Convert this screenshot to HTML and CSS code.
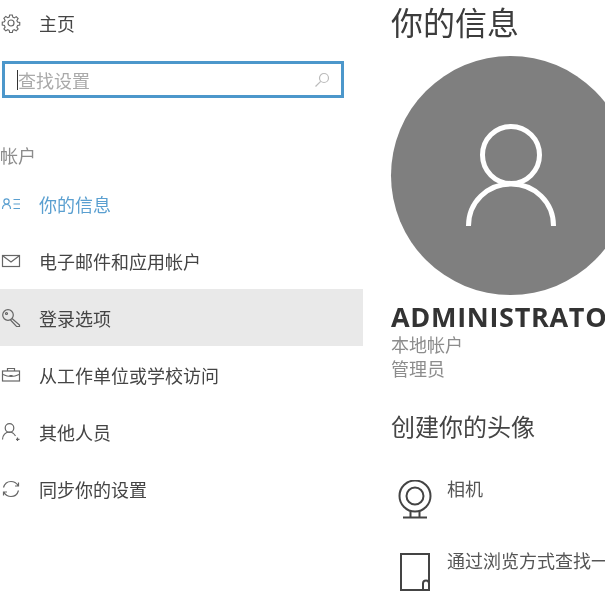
FILE: index.html
```html
<!DOCTYPE html>
<html lang="zh-CN">
<head>
<meta charset="utf-8">
<title>你的信息</title>
<link rel="stylesheet" href="styles.css">
</head>
<body>
<div class="page">
  <aside class="sidebar">
    <div class="home">
      <svg class="icon" viewBox="0 0 20 20"><circle cx="10" cy="10" r="3" /><path d="M8.600 1.600h2.800l.5 2.300 1.600.7 2-1.300 2 2-1.300 2 .7 1.600 2.300.5v2.800l-2.300.5-.7 1.600 1.300 2-2 2-2-1.300-1.600.7-.5 2.300H8.600l-.5-2.300-1.600-.7-2 1.300-2-2 1.300-2-.7-1.600-2.300-.5V9.200l2.300-.5.7-1.600-1.300-2 2-2 2 1.300 1.600-.7z" transform="translate(.5 .5) scale(.95)"/></svg>
      <span>主页</span>
    </div>
    <div class="search">
      <span class="caret"></span>
      <span class="placeholder">查找设置</span>
      <svg class="search-icon" viewBox="0 0 16 16"><circle cx="10" cy="6" r="4.500"/><path d="M6.700 9.300 1.500 14.500"/></svg>
    </div>
    <div class="section">帐户</div>
    <nav class="nav">
      <div class="row active">
        <svg class="icon" viewBox="0 0 20 20"><circle cx="5.500" cy="7.500" r="2.600"/><path d="M1.500 15c0-2.500 1.500-4.500 4-4.500s4 2 4 4.500M12.500 5.500h6.500M12.500 10h6.500M12.500 14.500h6.500"/></svg>
        <span>你的信息</span>
      </div>
      <div class="row">
        <svg class="icon" viewBox="0 0 20 20"><rect x="1.500" y="4.500" width="17" height="11"/><path d="M2 5l8 6 8-6"/></svg>
        <span>电子邮件和应用帐户</span>
      </div>
      <div class="row hover">
        <svg class="icon" viewBox="0 0 20 20"><circle cx="7" cy="7" r="5.300"/><circle cx="5.500" cy="5.500" r="1"/><path d="M11 10.500l7.500 6.500v1.500h-3L9.500 12"/></svg>
        <span>登录选项</span>
      </div>
      <div class="row">
        <svg class="icon" viewBox="0 0 20 20"><rect x="1.500" y="6" width="17" height="10"/><path d="M6.500 6V3.500h7V6M2 9.500c5 2.500 11 2.500 16 0M8.500 10.500h3"/></svg>
        <span>从工作单位或学校访问</span>
      </div>
      <div class="row">
        <svg class="icon" viewBox="0 0 20 20"><circle cx="8.500" cy="6" r="4.300"/><path d="M1.500 17.500c0-4.500 3-7.500 7-7.500 2.500 0 4.500 1.500 6 4M16.500 15.500v3.500M15 17.300h3.500"/></svg>
        <span>其他人员</span>
      </div>
      <div class="row">
        <svg class="icon" viewBox="0 0 20 20"><path d="M2.500 8.500C3.500 5 6.500 2.500 10 2.500c3 0 5.500 1.500 7 4M17.500 11.500c-1 3.500-4 6-7.500 6-3 0-5.500-1.500-7-4M17.500 3.500v3.500h-3.500M2.500 16.500v-3.500H6"/></svg>
        <span>同步你的设置</span>
      </div>
    </nav>
  </aside>
  <main class="main">
    <h1 class="title">你的信息</h1>
    <div class="avatar">
      <svg class="avatar-icon" viewBox="0 0 90 104"><circle cx="45" cy="31" r="28.500"/><path d="M2.500 102c0-24 19-42 42.500-42s42.500 18 42.500 42"/></svg>
    </div>
    <div class="name">ADMINISTRATOR</div>
    <div class="meta">本地帐户</div>
    <div class="meta">管理员</div>
    <h2 class="subtitle">创建你的头像</h2>
    <div class="option camera">
      <svg class="option-icon" viewBox="0 0 36 40"><circle cx="18" cy="16" r="15.500"/><circle cx="18" cy="16" r="8.500"/><path d="M13.500 31v6M22.500 31v6M6 37.500h24"/></svg>
      <span>相机</span>
    </div>
    <div class="option browse">
      <svg class="option-icon" viewBox="0 0 36 40"><path d="M4 2h28v36H4zM26 38V31.500a3 3 0 0 1 6 0"/></svg>
      <span>通过浏览方式查找一个</span>
    </div>
  </main>
</div>
</body>
</html>
```

FILE: styles.css
```css
* { box-sizing: border-box; }
html, body { margin: 0; padding: 0; background: #fff; }
body { font-family: "Noto Sans CJK SC", "Open Sans", sans-serif; color: #444; }
.page { width: 605px; height: 612px; overflow: hidden; display: flex; filter: blur(.55px); }
.sidebar { width: 363px; flex: none; padding-top: 5px; }
.home, .row { display: flex; align-items: center; gap: 18px; }
.home { height: 36px; font-size: 18px; line-height: 36px; }
.icon { width: 20px; height: 20px; margin-left: 1px; flex: none; fill: none; stroke: #666; stroke-width: 1.200; }
.search { display: flex; align-items: center; height: 37px; width: 342px; margin: 20px 0 0 2px; border: 3px solid #4c97cb; padding: 0 12px; }
.caret { width: 1px; height: 20px; background: #333; flex: none; }
.placeholder { font-size: 18px; color: #aaa; }
.search-icon { width: 16px; height: 16px; margin-left: auto; margin-right: -1px; fill: none; stroke: #bbb; stroke-width: 1.200; }
.section { margin-top: 44px; height: 26px; line-height: 26px; font-size: 18px; color: #8c8c8c; }
.nav { margin-top: 7px; }
.row { height: 57px; font-size: 18px; }
.active { color: #5a9fd0; }
.active .icon { stroke: #5a9fd0; }
.hover { background: #e9e9e9; }
.main { flex: none; width: 242px; padding-left: 28px; overflow: hidden; }
.title { margin: 0; font-weight: 400; font-size: 32px; line-height: 42px; color: #3c3c3c; height: 56px; white-space: nowrap; }
.avatar { width: 239px; height: 239px; border-radius: 50%; background: #7f7f7f; display: flex; align-items: center; justify-content: center; }
.avatar-icon { width: 90px; height: 104px; fill: none; stroke: #fff; stroke-width: 5; }
.name { margin-top: 6px; font-family: "Open Sans", sans-serif; font-weight: 700; font-size: 27px; line-height: 32px; height: 31px; white-space: nowrap; color: #333; letter-spacing: .7px; }
.meta { font-size: 18px; line-height: 24px; color: #8c8c8c; }
.subtitle { margin: 29px 0 0; font-weight: 400; font-size: 24px; line-height: 34px; color: #444; }
.option { display: flex; align-items: flex-start; gap: 14px; font-size: 18px; color: #555; white-space: nowrap; line-height: 24px; }
.camera { margin-top: 33px; height: 72px; }
.option-icon { width: 36px; height: 40px; margin: 4px 0 0 6px; flex: none; fill: none; stroke: #444; stroke-width: 2; }
```
